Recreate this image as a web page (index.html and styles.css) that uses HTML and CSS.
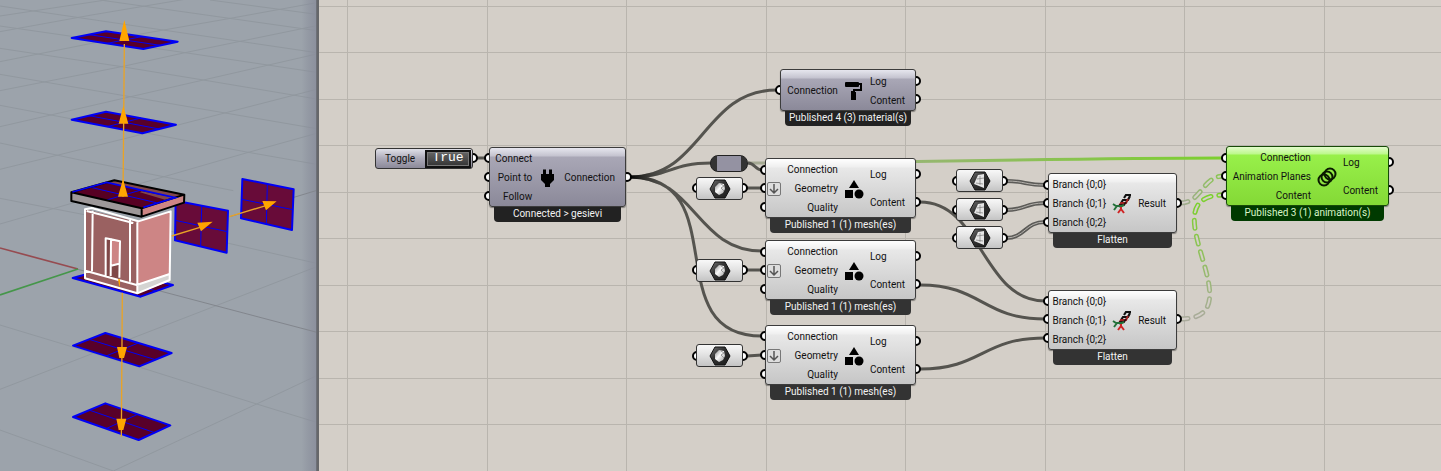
FILE: index.html
```html
<!DOCTYPE html>
<html lang="en">
<head>
<meta charset="utf-8">
<title>Node editor</title>
<link rel="stylesheet" href="styles.css">
</head>
<body>
<main class="workspace">
<section class="viewport" aria-label="3D viewport">
<svg class="scene" viewBox="0 0 951 1413" preserveAspectRatio="xMinYMin slice">
  <defs>
    <linearGradient id="edge"><stop offset="0" stop-color="#858a98" stop-opacity="0"/><stop offset="1" stop-color="#8c909d"/></linearGradient>
  </defs>
  <g class="ground">
    <path d="M0 18L950 158M0 78L555 158L950 217M0 145L365 200L610 240L950 297M0 223L390 290L950 386M0 316L745 457L950 493M0 429L240 480L700 572M0 595L620 715L950 790M0 975L430 1105L770 1212L950 1267M0 1290L340 1413M300 0L950 92M630 0L950 43"/>
    <path d="M0 48L370 -8M0 95L275 45L560 -3M0 185L365 112L680 57L950 8M0 272L365 200L555 158L950 77M0 380L610 240L950 162M0 508L390 412L950 268M0 672L745 457L950 400M0 1168L615 930L950 800M340 1413L770 1212L950 1127"/>
  </g>
  <rect x="905" width="46" height="1413" fill="url(#edge)"/>
  <path class="axis-far" d="M230 807L810 960L951 997M690 650L951 571"/>
  <path class="axis-x" d="M0 744L234 807"/>
  <path class="axis-y" d="M0 885L234 807"/>

  <g class="plane">
    <path d="M215 114L318 94L533 125L430 147Z"/><path class="thin" d="M267 104L481 136M425 110L322 130"/>
    <path d="M215 359L318 335L528 374L427 400Z"/><path class="thin" d="M267 347L478 387M423 354L321 380"/>
    <path d="M218 834L318 806L519 855L422 890Z"/><path class="thin" d="M270 820L470 873"/>
    <path d="M219 1037L316 999L515 1059L418 1099Z"/><path class="thin" d="M267 1018L466 1079M415 1029L318 1068"/>
    <path d="M219 1251L316 1210L511 1276L416 1320Z"/><path class="thin" d="M267 1230L464 1298M413 1243L318 1286"/>
  </g>
  <g class="plane side">
    <path d="M527 602L684 632L680 758L525 721Z"/><path class="thin" d="M605 617L602 740M526 661L682 695"/>
    <path d="M727 537L881 568L876 690L723 655Z"/><path class="thin" d="M802 552L799 672M725 598L879 629"/>
  </g>

  <g class="house">
    <path fill="#9a6161" d="M255 628L412 665L412 880L255 838Z"/>
    <path fill="#cd8585" d="M412 665L512 634L510 822L412 855Z"/>
    <path fill="#d4d4d2" d="M412 855L510 820L510 843L412 880Z"/>
    <path fill="#804848" d="M317 715L359 724L357 840L317 830Z"/>
    <path fill="#cd8585" d="M333 719L359 724L357 790L333 797Z"/>
    <path class="trim" d="M255 628L275 624L415 664L512 634L509 840L412 880L255 835ZM278 632L276 814M390 660L390 845M412 667L412 880M256 812L410 855L509 822M317 828L317 715L333 718L332 828M333 718L360 724L358 833M333 797L357 791M260 633L400 669"/>
  </g>
  <g class="roof">
    <path fill="#81474c" d="M215 577L343 541L552 584L425 625Z"/>
    <path class="roof-plane" d="M217 577L318 546L526 593L423 623Z"/>
    <path fill="#81474c" d="M425 574L526 593L500 601L420 577Z"/>
    <path class="roof-line" d="M268 561L473 609M423 570L320 600"/>
    <path fill="#9d9899" d="M214 577L425 625L424 650L214 603Z"/>
    <path fill="#cd8585" d="M425 625L552 584L552 608L424 650Z"/>
    <path class="roof-edge" d="M214 577L343 541L553 584L552 608L425 650L214 603ZM214 577L425 625L553 584M425 625V650"/>
    <path class="roof-blue" d="M217 576L320 547L526 593L430 622"/>
  </g>

  <g class="arrow">
    <path d="M373 132L370 480L369 590M367 878L364 1310M515 708L600 682M688 650L800 616"/>
    <path class="head" d="M373 60L388 123H358ZM370 317L385 371H356ZM369 537L384 590H354ZM351 1041H381L372 1074H358ZM349 1256H379L370 1290H356ZM592 668L638 665L603 694ZM787 603L830 604L798 631ZM354 838H360V861L357 856Z"/>
  </g>
</svg>
</section>

<section class="canvas" aria-label="Graph canvas">
<svg class="wires" width="1122" height="471" viewBox="319 0 1122 471">
  <defs>
    <linearGradient id="bundle" gradientUnits="userSpaceOnUse" x1="630" y1="0" x2="672" y2="0"><stop offset="0" stop-color="#000"/><stop offset="1" stop-color="#55544f" stop-opacity="0"/></linearGradient>
    <linearGradient id="relay" gradientUnits="userSpaceOnUse" x1="748" y1="0" x2="1224" y2="0"><stop offset="0" stop-color="#a5a895"/><stop offset="1" stop-color="#7cd02e"/></linearGradient>
    <linearGradient id="fadeUp" gradientUnits="userSpaceOnUse" x1="0" y1="319" x2="0" y2="205"><stop offset="0" stop-color="#aaab9c"/><stop offset="1" stop-color="#7cd02e"/></linearGradient>
    <linearGradient id="fadeShort" gradientUnits="userSpaceOnUse" x1="1181" y1="0" x2="1223" y2="0"><stop offset="0" stop-color="#a2a994"/><stop offset="1" stop-color="#88c94c"/></linearGradient>
  </defs>
  <path d="M748 163C910 163 1060 158 1224 158" stroke="url(#relay)" stroke-width="3" fill="none"/>
  <g class="wire">
    <path d="M475 158H486M630 177C703 177 703 90 777 90M630 177C670 177 670 163 711 163M630 177C696 177 696 251 762 251M630 177C736 177 656 336 762 336M748 163C755 163 755 170 762 170"/>
    <path d="M747 188H762M747 270H762M747 356L762 355M920 202C982 202 982 301 1045 301M920 285C982 285 982 319 1045 319M920 369C982 369 982 338 1045 338"/>
    <path stroke="url(#bundle)" d="M630 177C703 177 703 90 777 90M630 177C670 177 670 163 711 163M630 177C696 177 696 251 762 251M630 177C736 177 656 336 762 336"/>
  </g>
  <g class="list">
    <path d="M1006 181C1025 181 1025 185 1045 185M1006 210C1025 210 1025 203 1045 203M1006 238C1025 238 1025 222 1045 222"/>
    <path class="core" d="M1006 181C1025 181 1025 185 1045 185M1006 210C1025 210 1025 203 1045 203M1006 238C1025 238 1025 222 1045 222"/>
  </g>
  <g class="tree">
    <path stroke="url(#fadeShort)" d="M1180 203C1202 203 1202 176 1224 176"/>
    <path class="core" d="M1180 203C1202 203 1202 176 1224 176"/>
    <path stroke="url(#fadeUp)" d="M1180 319C1260 319 1144 195 1224 195"/>
    <path class="core" d="M1180 319C1260 319 1144 195 1224 195"/>
  </g>
  <g class="ports">
    <circle cx="473" cy="158" r="4"/><circle cx="489" cy="158" r="4"/><circle cx="489" cy="177" r="4"/><circle cx="489" cy="196" r="4"/><circle cx="627" cy="177" r="4"/>
    <circle cx="780" cy="90" r="4"/><circle cx="916" cy="81" r="4"/><circle cx="916" cy="99" r="4"/>
    <circle cx="765" cy="170" r="4"/><circle cx="765" cy="188" r="4"/><circle cx="765" cy="207" r="4"/><circle cx="916" cy="174" r="4"/><circle cx="916" cy="202" r="4"/>
    <circle cx="765" cy="252" r="4"/><circle cx="765" cy="270" r="4"/><circle cx="765" cy="289" r="4"/><circle cx="916" cy="256" r="4"/><circle cx="916" cy="284" r="4"/>
    <circle cx="765" cy="336" r="4"/><circle cx="765" cy="355" r="4"/><circle cx="765" cy="374" r="4"/><circle cx="916" cy="341" r="4"/><circle cx="916" cy="369" r="4"/>
    <circle cx="697" cy="188" r="4"/><circle cx="743" cy="188" r="4"/><circle cx="697" cy="270" r="4"/><circle cx="743" cy="270" r="4"/><circle cx="697" cy="356" r="4"/><circle cx="743" cy="356" r="4"/>
    <circle cx="957" cy="181" r="4"/><circle cx="1003" cy="181" r="4"/><circle cx="957" cy="210" r="4"/><circle cx="1003" cy="210" r="4"/><circle cx="957" cy="238" r="4"/><circle cx="1003" cy="238" r="4"/>
    <circle cx="1048" cy="185" r="4"/><circle cx="1048" cy="203" r="4"/><circle cx="1048" cy="222" r="4"/><circle cx="1177" cy="203" r="4"/>
    <circle cx="1048" cy="301" r="4"/><circle cx="1048" cy="319" r="4"/><circle cx="1048" cy="338" r="4"/><circle cx="1177" cy="319" r="4"/>
    <circle cx="1226" cy="158" r="4"/><circle cx="1226" cy="176" r="4"/><circle cx="1226" cy="195" r="4"/><circle cx="1389" cy="162" r="4"/><circle cx="1389" cy="190" r="4"/>
  </g>
</svg>

<svg class="defs" width="0" height="0">
  <defs>
    <linearGradient id="hexFill" x1="0" y1="0" x2="1" y2="1"><stop offset="0" stop-color="#777"/><stop offset=".4" stop-color="#333"/><stop offset="1" stop-color="#1a1a1a"/></linearGradient>
    <linearGradient id="gem" x1="0" y1="0" x2="1" y2="1"><stop offset="0" stop-color="#888"/><stop offset=".45" stop-color="#fafafa"/><stop offset="1" stop-color="#999"/></linearGradient>
  </defs>
  <symbol id="i-plug" viewBox="0 0 20 20"><path d="M5 1.500h3V6h3V1.500h3V6h2v6l-4 4v3H7v-3l-4-4V6h2z"/></symbol>
  <symbol id="i-roller" viewBox="0 0 20 20"><path d="M2 1h12a1 1 0 0 1 1 1h3v8h-7v1h1v8H7v-9h2V8h7V4h-1v1a1 1 0 0 1-1 1H2a1 1 0 0 1-1-1V2a1 1 0 0 1 1-1z"/></symbol>
  <symbol id="i-shapes" viewBox="0 0 20 20"><path d="M10 1l5 8H5zM1 11h8v8H1z"/><circle cx="15" cy="15" r="4.500"/></symbol>
  <symbol id="i-rings" viewBox="0 0 20 20"><g fill="none" stroke="#0a1a00" stroke-width="2"><circle cx="7" cy="13" r="5.500"/><circle cx="10" cy="10" r="5.500"/><circle cx="13" cy="7" r="5.500"/></g></symbol>
  <symbol id="i-dna" viewBox="0 0 20 20"><g fill="none"><path d="M19 1h-5l-2 3M18 2l-2 4h-5l-2 3" stroke="#111" stroke-width="2.200"/><path d="M16 5l-2 4h-5l-2 3" stroke="#a02020" stroke-width="2"/><path d="M14 8l-2 3H8l-1 2" stroke="#2c1111" stroke-width="1.800"/><path d="M12 11l-2 1H4l-3-2M5 12l-3 4" stroke="#25713a" stroke-width="2"/><path d="M9 13v2l-3 4M9 15l3 4" stroke="#cf2525" stroke-width="2"/></g></symbol>
  <symbol id="i-mesh" viewBox="0 0 22 20"><path d="M6 1h10l5 9-5 9H6l-5-9z" fill="url(#hexFill)" stroke="#111"/><path d="M6 8l4-4 5 1 1 5-2 4-4 2-4-3z" fill="url(#gem)"/><path d="M12 5l3 2-3 2 3 3" fill="none" stroke="#999"/></symbol>
  <symbol id="i-plane" viewBox="0 0 22 20"><path d="M6 1h10l5 9-5 9H6l-5-9z" fill="url(#hexFill)" stroke="#111"/><path d="M9 4l6-1v14l-10-4z" fill="#e6e6e6"/><path d="M11 5v9M8 8l7-1M7 12l7 1" stroke="#888" stroke-width=".8" fill="none"/></symbol>
  <symbol id="i-down" viewBox="0 0 12 12"><path d="M6 1v9M2 6l4 4 4-4" fill="none" stroke="#555" stroke-width="1.500"/></symbol>
</svg>

<article class="toggle">
  <label for="toggle">Toggle</label><button id="toggle" type="button">True</button>
</article>

<article class="node n-connect dim">
  <div class="body"><ul class="in"><li>Connect</li><li>Point to</li><li>Follow</li></ul><svg class="icon"><use href="#i-plug"/></svg><ul class="out"><li>Connection</li></ul></div>
  <footer>Connected &gt; gesievi</footer>
</article>

<article class="node n-material dim">
  <div class="body short"><ul class="in"><li>Connection</li></ul><svg class="icon"><use href="#i-roller"/></svg><ul class="out"><li>Log</li><li>Content</li></ul></div>
  <footer>Published 4 (3) material(s)</footer>
</article>

<div class="capsule"></div>

<article class="node mesh n-mesh1">
  <div class="body"><svg class="graft"><use href="#i-down"/></svg><ul class="in"><li>Connection</li><li>Geometry</li><li>Quality</li></ul><svg class="icon"><use href="#i-shapes"/></svg><ul class="out"><li>Log</li><li>Content</li></ul></div>
  <footer>Published 1 (1) mesh(es)</footer>
</article>
<article class="node mesh n-mesh2">
  <div class="body"><svg class="graft"><use href="#i-down"/></svg><ul class="in"><li>Connection</li><li>Geometry</li><li>Quality</li></ul><svg class="icon"><use href="#i-shapes"/></svg><ul class="out"><li>Log</li><li>Content</li></ul></div>
  <footer>Published 1 (1) mesh(es)</footer>
</article>
<article class="node mesh n-mesh3">
  <div class="body"><svg class="graft"><use href="#i-down"/></svg><ul class="in"><li>Connection</li><li>Geometry</li><li>Quality</li></ul><svg class="icon"><use href="#i-shapes"/></svg><ul class="out"><li>Log</li><li>Content</li></ul></div>
  <footer>Published 1 (1) mesh(es)</footer>
</article>

<div class="param p-mesh1"><svg><use href="#i-mesh"/></svg></div>
<div class="param p-mesh2"><svg><use href="#i-mesh"/></svg></div>
<div class="param p-mesh3"><svg><use href="#i-mesh"/></svg></div>
<div class="param p-plane1"><svg><use href="#i-plane"/></svg></div>
<div class="param p-plane2"><svg><use href="#i-plane"/></svg></div>
<div class="param p-plane3"><svg><use href="#i-plane"/></svg></div>

<article class="node branch n-branch1">
  <div class="body"><ul class="in"><li>Branch {0;0}</li><li>Branch {0;1}</li><li>Branch {0;2}</li></ul><svg class="icon"><use href="#i-dna"/></svg><ul class="out"><li>Result</li></ul></div>
  <footer>Flatten</footer>
</article>
<article class="node branch n-branch2">
  <div class="body"><ul class="in"><li>Branch {0;0}</li><li>Branch {0;1}</li><li>Branch {0;2}</li></ul><svg class="icon"><use href="#i-dna"/></svg><ul class="out"><li>Result</li></ul></div>
  <footer>Flatten</footer>
</article>

<article class="node n-anim selected">
  <div class="body"><ul class="in"><li>Connection</li><li>Animation Planes</li><li>Content</li></ul><svg class="icon"><use href="#i-rings"/></svg><ul class="out"><li>Log</li><li>Content</li></ul></div>
  <footer>Published 3 (1) animation(s)</footer>
</article>
</section>
</main>
</body>
</html>
```

FILE: styles.css
```css
* { box-sizing: border-box; }
body { margin: 0; font: 10px/14px Roboto, "Open Sans", sans-serif; color: #111; }
ul { list-style: none; margin: 0; padding: 0; }

.workspace { display: flex; min-height: 100vh; overflow: hidden; }

/* 3D viewport */
.viewport { position: relative; width: 22%; flex: none; background: #9ca3ab; border-right: 1px solid #6d7078; overflow: hidden; }
.scene { position: absolute; inset: 0; width: 100%; height: 100%; }
.ground { fill: none; stroke: #91989f; stroke-width: 3; }
.axis-far { fill: none; stroke: #82868d; stroke-width: 3; }
.axis-x { stroke: #964b50; stroke-width: 5; }
.axis-y { stroke: #45964a; stroke-width: 5; }
.plane { fill: #58002a; stroke: #0000f5; stroke-width: 6; stroke-linejoin: round; }
.plane.side { fill: #680b39; }
.plane .thin { fill: none; stroke-width: 3; }
.house .trim { fill: none; stroke: #fff; stroke-width: 6; stroke-linejoin: round; }
.roof-plane { fill: #570023; }
.roof-line { fill: none; stroke: #0000f5; stroke-width: 3; }
.roof-edge { fill: none; stroke: #000; stroke-width: 6; stroke-linejoin: round; }
.roof-blue { fill: none; stroke: #0000f5; stroke-width: 5; }
.arrow { fill: none; stroke: #e9a326; stroke-width: 4; }
.arrow .head { fill: #ffa500; stroke: none; }

/* Graph canvas */
.canvas {
  position: relative; flex: 1; min-width: 0; border-left: 2px solid #66676a;
  background:
    repeating-linear-gradient(90deg, #b9b5ae 0 1px, transparent 1px 140px) 28px 0 / 279px 100%,
    repeating-linear-gradient(#b9b5ae 0 1px, transparent 1px 46px) 0 6px / 100% 93px,
    #d4cfc8;
}
.canvas {
  background:
    repeating-linear-gradient(90deg, #b9b5ae 0 1px, transparent 1px 140px) 28px 0 / 279px 100%,
    linear-gradient(#b9b5ae 1px, transparent 1px) 0 6px / 100% 93px,
    linear-gradient(#b9b5ae 1px, transparent 1px) 0 52px / 100% 93px,
    #d4cfc8;
}
.wires { position: absolute; left: 0; top: 0; }
.defs { position: absolute; }
.wire { fill: none; stroke: #55544f; stroke-width: 3; }
.list { fill: none; stroke: #5c5b58; stroke-width: 4; }
.list .core { stroke: #b5b2ad; stroke-width: 1; }
.tree { fill: none; stroke-width: 5; stroke-linecap: round; stroke-dasharray: 8 8; }
.tree .core { stroke: #d4cfc8; stroke-width: 2; }
.ports { fill: #fff; stroke: #000; stroke-width: 2; }

.node { position: absolute; }
.body {
  display: flex; justify-content: flex-end; gap: 6px; height: 60px; padding: 2px 10px 0 2px;
  border: 1px solid #3c3c3c; border-radius: 3px;
  background: linear-gradient(#fff, #efefef 8px, #e8e8e8 9px, #c6c6c6);
  box-shadow: 0 1px 1px #0006;
}
.body.short { height: 42px; }
.in, .out { display: grid; grid-auto-rows: 1fr; align-items: center; white-space: nowrap; }
.in { text-align: right; }
.icon { width: 20px; height: 20px; align-self: center; flex: none; }
.graft { width: 14px; height: 14px; align-self: center; margin-right: auto; border: 1px solid #777; border-radius: 2px; background: #ddd; flex: none; }
.node footer {
  height: 15px; margin: 0 5px; border-radius: 0 0 4px 4px;
  background: #333; color: #f2f2f2; text-align: center; white-space: nowrap;
}
.dim .body { background: linear-gradient(#e6e6ee, #c4c3cf 8px, #a9a7b6 9px, #8b8999); }
.dim footer { background: #222; }
.selected .body { background: linear-gradient(#e2fccb, #bdf88c 7px, #98f04a 8px, #84d936); border-color: #174a08; }
.selected footer { background: #003a00; color: #d8f5c8; }

.n-connect { left: 170px; top: 147px; width: 137px; }
.n-material { left: 461px; top: 69px; width: 136px; }
.mesh { left: 446px; width: 151px; }
.n-mesh1 { top: 158px; }
.n-mesh2 { top: 240px; }
.n-mesh3 { top: 325px; }
.branch { left: 729px; width: 129px; }
.n-branch1 { top: 173px; }
.n-branch2 { top: 290px; }
.n-anim { left: 907px; top: 146px; width: 163px; }

.toggle {
  position: absolute; left: 56px; top: 148px; width: 98px; height: 21px;
  display: flex; align-items: center; justify-content: space-between; padding: 0 1px 0 9px;
  border: 1px solid #333; border-radius: 3px;
  background: linear-gradient(#e0e0e8, #aeacba 9px, #8b8999);
}
.toggle button {
  width: 46px; height: 18px; padding: 0 0 2px; border: 2px solid #111; outline: 1px solid #777; outline-offset: -3px;
  background: linear-gradient(#666, #333); color: #fff; font: 13px/12px "Liberation Mono", monospace;
}

.capsule {
  position: absolute; left: 391px; top: 155px; width: 38px; height: 17px;
  border: 1px solid #222; border-radius: 8px;
  background: linear-gradient(90deg, #333 6px, #9492a2 6px, #9492a2 30px, #333 30px);
}
.param {
  position: absolute; width: 47px; height: 23px; display: grid; place-items: center;
  border: 1px solid #333; border-radius: 3px; background: linear-gradient(#f8f8f8, #e4e4e4 9px, #c4c4c4);
}
.param svg { width: 22px; height: 20px; }
.p-mesh1, .p-mesh2, .p-mesh3 { left: 377px; }
.p-plane1, .p-plane2, .p-plane3 { left: 637px; }
.p-mesh1 { top: 177px; }
.p-mesh2 { top: 259px; }
.p-mesh3 { top: 344px; }
.p-plane1 { top: 169px; }
.p-plane2 { top: 198px; }
.p-plane3 { top: 226px; }
```
